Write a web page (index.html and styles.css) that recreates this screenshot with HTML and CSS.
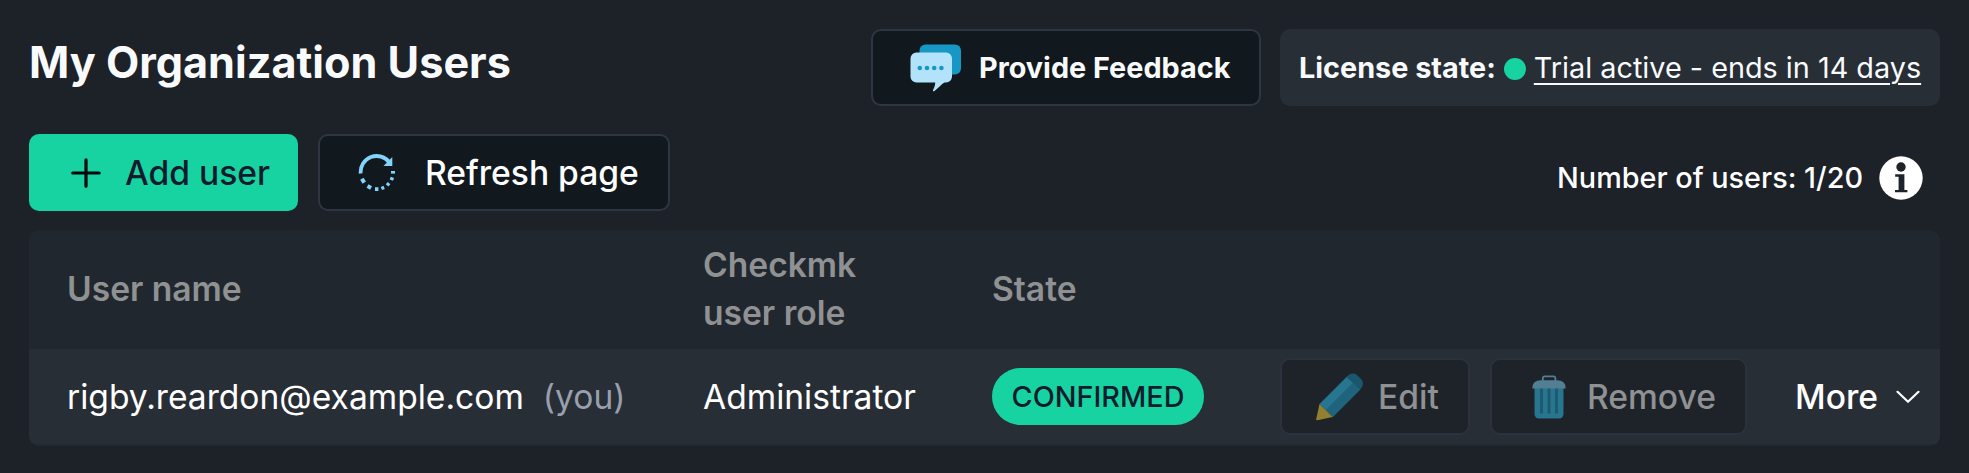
FILE: index.html
```html
<!DOCTYPE html>
<html lang="en">
<head>
<meta charset="utf-8">
<title>My Organization Users</title>
<link rel="stylesheet" href="styles.css">
</head>
<body>
<main class="page">
  <header class="topbar">
    <h1 class="title"><span>My Organization Users</span></h1>
    <button class="btn btn-feedback">
      <svg class="icon-chat" width="52" height="48" viewBox="0 0 52 48">
        <rect x="9.500" y="0.500" width="41.500" height="30" rx="6" fill="#1797c5"/>
        <path d="M6.500 8.500h29.500a6 6 0 0 1 6 6v18a6 6 0 0 1-6 6h-1.500c-3 1.500-6 5.500-10 8.500-1 .7-1.800 0-1.500-1 1.200-2.500 2.300-4.500 2.200-7.500h-18.700a6 6 0 0 1-6-6v-18a6 6 0 0 1 6-6z" fill="#b3e3fb"/>
        <g fill="#1797c5"><circle cx="9.800" cy="24" r="2.300"/><circle cx="17" cy="24" r="2.300"/><circle cx="24.200" cy="24" r="2.300"/><circle cx="31.400" cy="24" r="2.300"/></g>
      </svg>
      <span>Provide Feedback</span>
    </button>
    <div class="license"><strong>License state:</strong><i class="dot"></i><a class="license-link">Trial active - ends in 14 days</a></div>
  </header>

  <section class="toolbar">
    <button class="btn btn-add">
      <svg width="30" height="30" viewBox="0 0 30 30"><path d="M15 1.800v26.400M1.800 15h26.400" stroke="#05080a" stroke-width="3.200" stroke-linecap="round"/></svg>
      <span>Add user</span>
    </button>
    <button class="btn btn-refresh">
      <svg width="38" height="38" viewBox="0 0 38 38" fill="none" stroke="#83d3fb">
        <path d="M2.700 19.500A16 16 0 0 1 31.500 8.500" stroke-width="3.800"/>
        <path d="M34.300 3v9H25.500z" fill="#83d3fb" stroke="none"/>
        <g fill="#83d3fb" stroke="none">
          <rect x="33" y="17" width="4" height="2.600"/>
          <rect x="32" y="23.300" width="3.600" height="3" transform="rotate(20 34 25)"/>
          <rect x="28.500" y="28.600" width="3.400" height="3" transform="rotate(42 30 30)"/>
          <rect x="23.300" y="32.200" width="3" height="3.400" transform="rotate(-22 25 34)"/>
          <rect x="17" y="33.200" width="3.400" height="3.800"/>
          <rect x="9.300" y="31" width="4" height="4" transform="rotate(28 11.300 33)"/>
          <rect x="3.200" y="24.500" width="4" height="4.600" transform="rotate(-32 5 27)"/>
        </g>
      </svg>
      <span>Refresh page</span>
    </button>
    <div class="count"><span>Number of users: 1/20</span>
      <svg width="44" height="44" viewBox="0 0 44 44"><circle cx="22" cy="22" r="21.700" fill="#fff"/><g fill="#1d2329"><circle cx="22" cy="11" r="4.700"/><path d="M16.200 18.300h9.200v15.600h3v2.400H16v-2.400h3.600V20.700h-3.400z"/></g></svg>
    </div>
  </section>

  <section class="table">
    <div class="row head">
      <div>User name</div>
      <div>Checkmk<br>user role</div>
      <div>State</div>
      <div></div>
    </div>
    <div class="row body">
      <div><span>rigby.reardon@example.com</span><span class="you">(you)</span></div>
      <div>Administrator</div>
      <div><span class="badge">CONFIRMED</span></div>
      <div class="actions">
        <button class="btn btn-row btn-edit">
          <svg width="49" height="49" viewBox="0 0 49 49">
            <path d="M4.500 32L32.500 4L39 10.500L11 38.500z" fill="#27758f"/>
            <path d="M10.500 38.500L38.500 10.500L45.500 17.500L17.500 45.500z" fill="#1f637c"/>
            <path d="M31.500 5C35 1.300 38.500.500 42 3L46 7C49 10.500 48.500 14 45 17.500z" fill="#1a576e"/>
            <path d="M4.500 32L17.500 45L2.500 48.300Q1 48.500 1.200 47z" fill="#92802f"/>
          </svg>
          <span>Edit</span>
        </button>
        <button class="btn btn-row btn-remove">
          <svg width="34" height="44" viewBox="0 0 34 44">
            <path d="M10.800 6V3.500Q10.800 1.300 13 1.300H21.200Q23.400 1.300 23.400 3.500V6" fill="none" stroke="#537f95" stroke-width="1.800"/>
            <path d="M2.500 13H31.500V39a4.500 4.500 0 0 1-4.500 4.500H7A4.500 4.500 0 0 1 2.500 39z" fill="#27758f"/>
            <path d="M9.500 13V38.500M17 13V38.500M24.500 13V38.500" stroke="#1c596f" stroke-width="2.800"/>
            <path d="M.300 13.500Q.300 5.300 9 5.300H25Q33.700 5.300 33.700 13.500z" fill="#537f95"/>
          </svg>
          <span>Remove</span>
        </button>
        <div class="more"><span>More</span>
          <svg width="24" height="14" viewBox="0 0 24 14"><path d="M1.500 1.800L12 11.800L22.500 1.800" fill="none" stroke="#fff" stroke-width="2.200" stroke-linecap="round" stroke-linejoin="round"/></svg>
        </div>
      </div>
    </div>
  </section>
</main>
</body>
</html>
```
FILE: styles.css
```css
* { box-sizing: border-box; }
body {
  margin: 0;
  background: #1d2128;
  color: #fff;
  font-family: Inter, sans-serif;
  font-size: 33.6px;
}
.page { padding: 29px 29px 0; height: 473px; }
.topbar, .toolbar, .btn, .license, .count, .actions, .more { display: flex; align-items: center; }
.topbar { height: 77px; }
.title { margin: -11px auto 0 0; font-size: 43.2px; line-height: 54px; font-weight: 700; color: #f9fafb; }
.btn {
  height: 77px;
  padding: 0;
  border: 2px solid #2e3641;
  border-radius: 10px;
  background: #11181e;
  color: #fff;
  font: 500 33.6px Inter, sans-serif;
  white-space: nowrap;
}
.btn svg, .count svg, .more svg { flex: none; display: block; }
.btn-feedback { width: 390px; padding-left: 37px; gap: 17px; font-size: 28.8px; font-weight: 700; color: #f9fafb; margin-right: 19px; }
.license { width: 660px; height: 77px; padding-left: 19px; border-radius: 10px; background: #282e36; font-size: 28.8px; color: #f9fafb; white-space: nowrap; }
.license strong { font-weight: 700; }
.dot { width: 22px; height: 22px; border-radius: 50%; background: #17d3a2; margin: 3px 8px 0 8px; }
.license-link { text-decoration: underline; text-decoration-thickness: 2px; text-underline-offset: 5px; }
.toolbar { height: 77px; margin-top: 28px; }
.btn-add { width: 269px; padding-left: 40px; gap: 24px; background: #17d3a2; border-color: #17d3a2; color: #101b2b; }
.btn-refresh { width: 352px; margin-left: 20px; padding-left: 38px; gap: 29px; }
.count { margin: 10px 17px 0 auto; gap: 16px; font-size: 28.8px; font-weight: 500; }
.table { margin-top: 19px; border-radius: 10px; overflow: hidden; background: #222930; padding-bottom: 2px; }
.row { display: grid; grid-template-columns: 636px 289px 288px 1fr; align-items: center; padding-left: 38px; }
.head { height: 119px; padding-bottom: 2px; color: #8f9193; font-weight: 600; line-height: 48px; background: #21272e; }
.body { height: 95px; background: #282e36; }
.you { margin-left: 19px; color: #989fad; }
.badge { display: inline-flex; align-items: center; justify-content: center; width: 212px; height: 57px; border-radius: 29px; background: #17d3a2; color: #101b2b; font-size: 28.8px; font-weight: 500; vertical-align: middle; }
.btn-row { background: #1d2329; border-color: #2b323d; color: #8f9193; font-weight: 500; }
.btn-edit { width: 190px; padding-left: 33px; gap: 14px; }
.btn-remove { width: 257px; margin-left: 20px; padding-left: 40px; gap: 21px; }
.more { margin-left: 48px; gap: 18px; font-weight: 500; }
```
